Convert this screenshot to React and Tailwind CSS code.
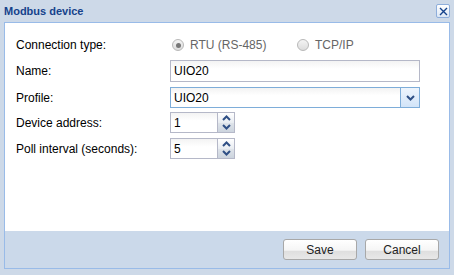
import React from 'react';

const font = { fontFamily: '"Liberation Sans", Arial, sans-serif' };

const Radio = ({ checked, label }) => (
  <label className="flex items-center gap-[6px] text-[12px] text-[#666]">
    <span className="w-[12px] h-[12px] rounded-full border border-[#b8b8b8] bg-gradient-to-b from-[#f4f4f4] to-[#dcdcdc] flex items-center justify-center">
      {checked && <span className="w-[5px] h-[5px] rounded-full bg-[#777]" />}
    </span>
    {label}
  </label>
);

const Chevron = ({ up, className = '' }) => (
  <svg width="9" height="6" viewBox="0 0 9 6" className={className}>
    <path d={up ? 'M1 5 L4.5 1.5 L8 5' : 'M1 1 L4.5 4.5 L8 1'} fill="none" stroke="#2f4f85" strokeWidth="2" />
  </svg>
);

const Spinner = ({ value }) => (
  <div className="flex h-[21px]">
    <div className="w-[48px] h-full border border-[#b5b8c8] bg-gradient-to-b from-[#f3f3f3] to-white to-[40%] px-[3px] flex items-center text-[12px] text-black">
      {value}
    </div>
    <div className="w-[17px] h-full border border-l-0 border-[#b5b8c8] flex flex-col">
      <div className="flex-1 flex items-center justify-center bg-gradient-to-b from-white to-[#e8ecf1]">
        <Chevron up />
      </div>
      <div className="flex-1 flex items-center justify-center bg-gradient-to-b from-[#dfe4ea] to-[#ccd4de]">
        <Chevron />
      </div>
    </div>
  </div>
);

const Row = ({ label, children, className = '' }) => (
  <div className={`flex items-center ${className}`}>
    <div className="w-[154px] text-[12px] text-black">{label}</div>
    {children}
  </div>
);

const Button = ({ children }) => (
  <button className="w-[74px] h-[21px] rounded-[3px] border border-[#a8a8a8] bg-[linear-gradient(to_bottom,#ffffff_0%,#f5f5f5_55%,#dedede_56%,#e8e8e8_100%)] text-[12px] text-[#222] flex items-center justify-center">
    {children}
  </button>
);

export default function App() {
  return (
    <div className="w-[454px] h-[275px] bg-[#cdd9e8] flex flex-col" style={font}>
      <div className="h-[22px] flex items-center justify-between pl-[4px] pr-[4px]">
        <span className="text-[11px] font-bold text-[#15428b]">Modbus device</span>
        <button className="w-[14px] h-[14px] border border-[#8eaedb] bg-gradient-to-b from-white to-[#dbe6f4] rounded-[2px] flex items-center justify-center">
          <svg width="9" height="9" viewBox="0 0 9 9">
            <path d="M1 1 L8 8 M8 1 L1 8" stroke="#15428b" strokeWidth="1.4" />
          </svg>
        </button>
      </div>
      <div className="ml-[4px] w-[446px] h-[247px] border border-[#99bbe8] flex flex-col">
        <div className="bg-white flex-1 pt-[11px] pl-[11px]">
          <Row label="Connection type:" className="h-[22px]">
            <div className="flex items-center pl-[2px]">
              <div className="w-[125px]">
                <Radio checked label="RTU (RS-485)" />
              </div>
              <Radio label="TCP/IP" />
            </div>
          </Row>
          <Row label="Name:" className="mt-[4px]">
            <div className="w-[250px] h-[22px] border border-[#b5b8c8] bg-gradient-to-b from-[#f3f3f3] to-white to-[40%] px-[3px] flex items-center text-[12px] text-black">
              UIO20
            </div>
          </Row>
          <Row label="Profile:" className="mt-[5px]">
            <div className="w-[250px] h-[21px] border border-[#7eadd9] flex">
              <div className="flex-1 px-[3px] flex items-center text-[12px] text-black bg-gradient-to-b from-[#f3f3f3] to-white to-[40%]">UIO20</div>
              <div className="w-[19px] border-l border-[#7eadd9] bg-gradient-to-b from-[#eef5fd] to-[#d2e4f8] flex items-center justify-center">
                <Chevron />
              </div>
            </div>
          </Row>
          <Row label="Device address:" className="mt-[4px]">
            <Spinner value="1" />
          </Row>
          <Row label="Poll interval (seconds):" className="mt-[5px]">
            <Spinner value="5" />
          </Row>
        </div>
        <div className="h-[37px] flex items-center justify-end gap-[8px] pr-[10px] bg-[#cbd9ea]">
          <Button>Save</Button>
          <Button>Cancel</Button>
        </div>
      </div>
    </div>
  );
}
